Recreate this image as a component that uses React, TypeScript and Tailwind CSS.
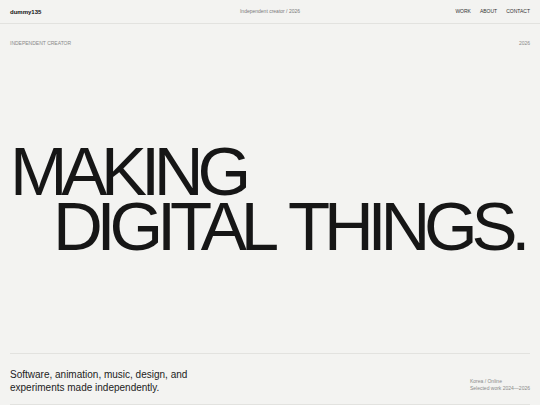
const navLinks = ["WORK", "ABOUT", "CONTACT"];

const App = () => {
  return (
    <div className="min-h-screen h-[405px] flex flex-col bg-[#f3f3f1] text-[#161616] font-['Liberation_Sans',Arial,sans-serif]">
      {/* Header */}
      <header className="h-[24px] shrink-0 grid grid-cols-3 items-center px-[10px] border-b border-[#e2e2df]">
        <p className="text-[6px] leading-none font-bold text-[#111]">dummy135</p>
        <p className="text-[5px] leading-none text-[#7a7a7a] text-center">
          Independent creator / 2026
        </p>
        <nav className="flex justify-end gap-[9px] text-[5px] leading-none text-[#333]">
          {navLinks.map((link) => (
            <a key={link} href="#">
              {link}
            </a>
          ))}
        </nav>
      </header>

      <main className="flex-1 flex flex-col px-[10px]">
        {/* Top labels */}
        <div className="flex justify-between pt-[16px] text-[5px] leading-[6px] text-[#8a8a8a]">
          <p>INDEPENDENT CREATOR</p>
          <p>2026</p>
        </div>

        {/* Hero */}
        <h1 className="mt-[98px] text-[69px] leading-[55px] tracking-[-0.09em] [word-spacing:6px] font-normal text-[#161616]">
          <span className="block">MAKING</span>
          <span className="block pl-[43px]">DIGITAL THINGS.</span>
        </h1>

        <div className="flex-1" />

        {/* Footer */}
        <footer className="flex justify-between items-end border-y border-[#e2e2df] pt-[15px] pb-[10px]">
          <p className="text-[10px] leading-[12.5px] text-[#222]">
            Software, animation, music, design, and
            <br />
            experiments made independently.
          </p>
          <div className="mb-[3px] text-[5px] leading-[6.4px] text-[#8a8a8a]">
            <p>Korea / Online</p>
            <p>Selected work 2024—2026</p>
          </div>
        </footer>
      </main>
    </div>
  );
};

export default App;
